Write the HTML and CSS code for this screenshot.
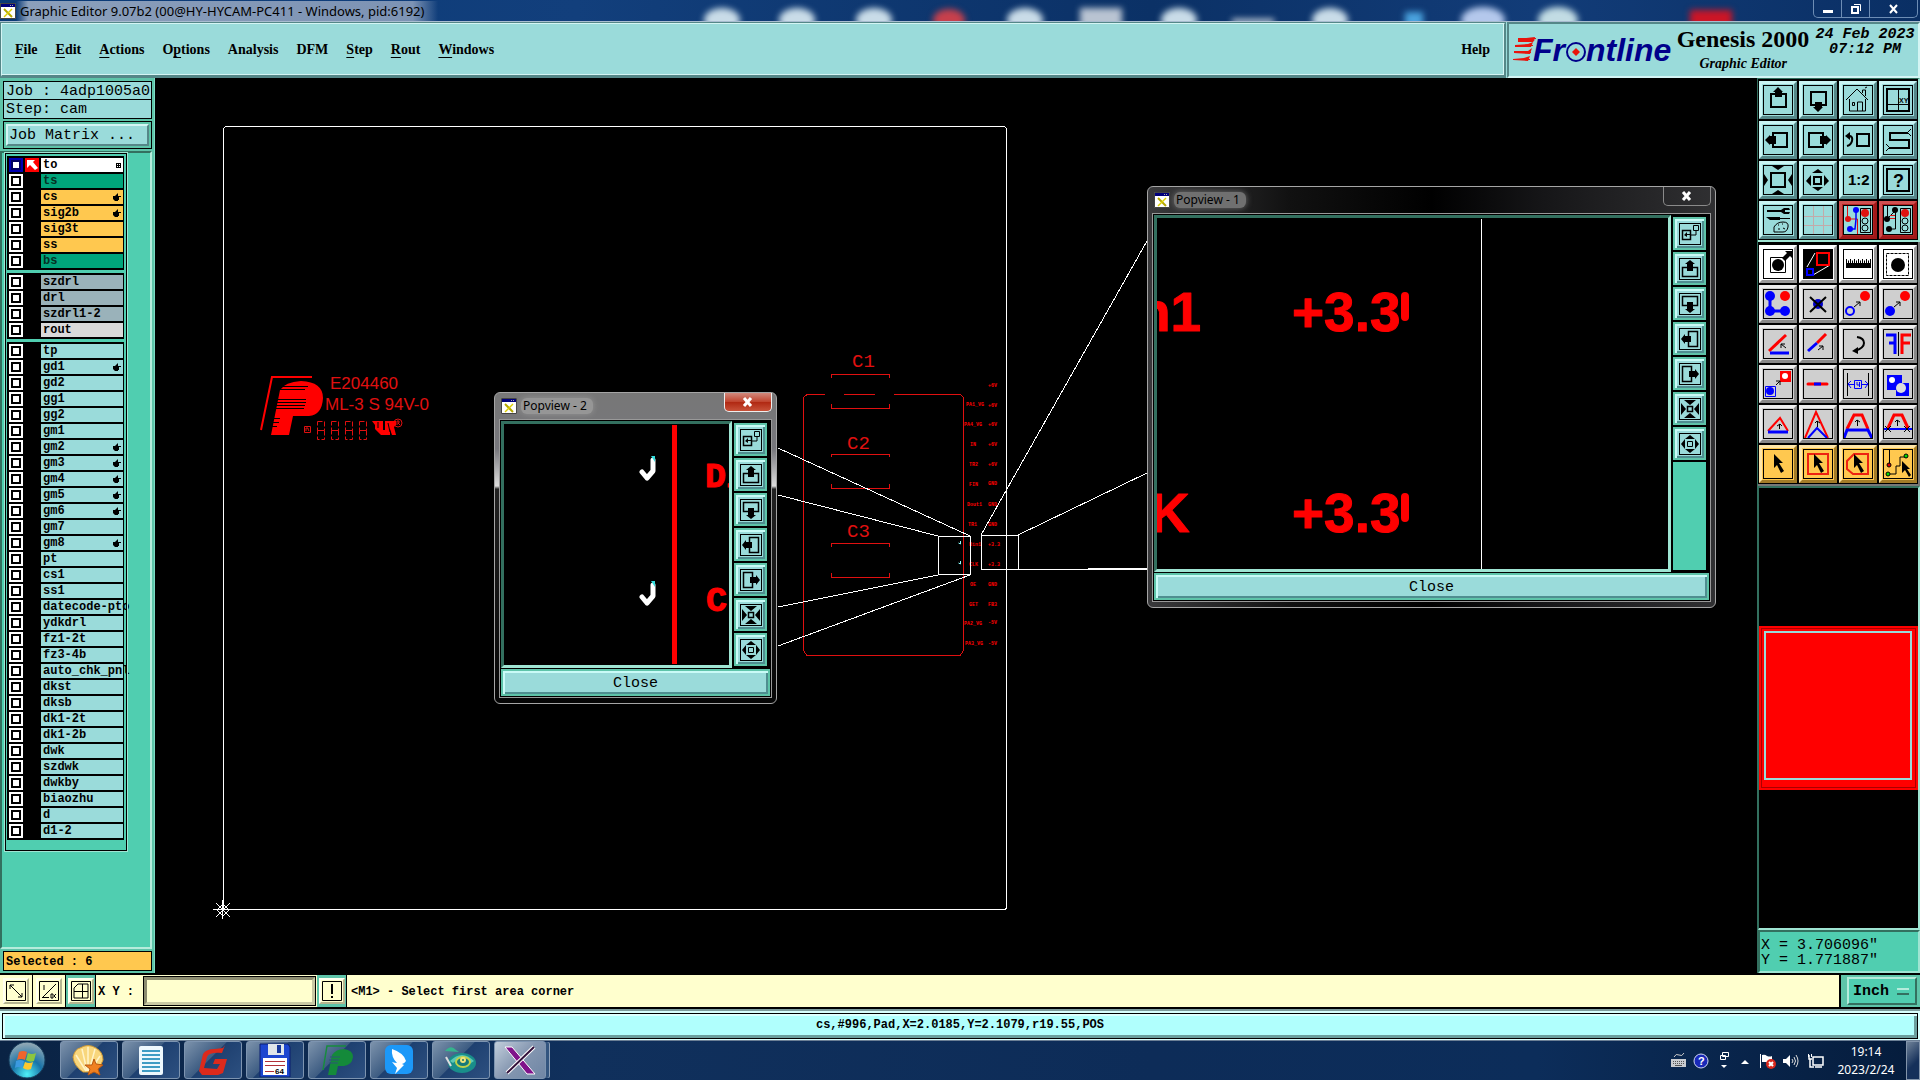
FILE: index.html
```html
<!DOCTYPE html>
<html lang="en">
  <head>
    <meta charset="utf-8">
    <title>Graphic Editor 9.07b2</title>
    <link rel="stylesheet" href="styles.css">
  </head>
  <body>
    <!-- shared icons -->
    <svg class="defs" width="0" height="0">
      <symbol id="xwin" viewBox="0 0 16 16"><path fill="#fff" stroke="#444" d="M.5.5h15v15H.5z"/><path fill="#00007c" d="M1 1h14v3H1z"/><path stroke="#aaa" d="M10 2.500h1m1 0h1"/><path stroke="#b5a800" stroke-width="2" d="M4 6l8 8"/><path stroke="#ddd000" stroke-width="1.500" d="M12 6l-8 8"/></symbol>
      <symbol id="hand" viewBox="0 0 8 8"><path d="M0 3h2l1-1 2-2v3h3v1H6v3H5v1H2L0 6z"/></symbol>
      <symbol id="cursor" viewBox="0 0 28 28"><path d="M10 4l9 9-4 0 5 8-3 2-4-8-3 3z"/></symbol>
      <symbol id="p-zoom" viewBox="0 0 20 20"><path fill="none" stroke="#000" d="M13.500 1.500h5v5h-5zM16 7v4h-6"/><path fill="none" stroke="#000" stroke-width="1.500" d="M2.500 6.500h8v9h-8z"/><path d="M4 11l3-3v2h4v1H7v2z"/></symbol>
      <symbol id="p-up" viewBox="0 0 20 20"><path fill="none" stroke="#000" stroke-width="1.500" d="M7 8.500H2.500v9h15v-9H13"/><path d="M10 1l5 4h-2v7H7V5H5z"/></symbol>
      <symbol id="p-down" viewBox="0 0 20 20"><path fill="none" stroke="#000" stroke-width="1.500" d="M7 11.500H2.500v-9h15v9H13"/><path d="M10 19l5-4h-2V8H7v7H5z"/></symbol>
      <symbol id="p-left" viewBox="0 0 20 20"><path fill="none" stroke="#000" stroke-width="1.500" d="M8.500 7V2.500h9v15h-9V13"/><path d="M1 10l4-5v2h6v6H5v2z"/></symbol>
      <symbol id="p-right" viewBox="0 0 20 20"><path fill="none" stroke="#000" stroke-width="1.500" d="M11.500 7V2.500h-9v15h9V13"/><path d="M19 10l-4-5v2H9v6h6v2z"/></symbol>
      <symbol id="p-in" viewBox="0 0 20 20"><path fill="none" stroke="#000" stroke-width="1.500" d="M7.500 7.500h5v5h-5z"/><path d="M4 1h12l-6 5zM4 19h12l-6-5zM1 4v12l5-6zM19 4v12l-5-6z"/></symbol>
      <symbol id="p-out" viewBox="0 0 20 20"><path fill="none" stroke="#000" d="M7.500 7.500h5v5h-5z"/><path d="M5 5h10l-5-4zM5 15h10l-5 4zM5 5v10l-4-5zM15 5v10l4-5z"/></symbol>
    </svg>

    <header class="titlebar">
      <svg class="glass" width="100%" height="22">
        <g class="blurred">
          <ellipse cx="722" cy="20" rx="18" ry="12" fill="#c9dce8"/><ellipse cx="797" cy="20" rx="18" ry="12" fill="#c9dce8"/><ellipse cx="874" cy="20" rx="18" ry="12" fill="#c9dce8"/><ellipse cx="949" cy="20" rx="16" ry="11" fill="#c7404c"/>
          <ellipse cx="1025" cy="20" rx="18" ry="12" fill="#c9dce8"/><path d="M1080 8h42v20h-42z" fill="#b9c4d2"/><ellipse cx="1179" cy="20" rx="18" ry="12" fill="#c9dce8"/><path d="M1232 19h42v5h-42z" fill="#d0d8e0"/>
          <ellipse cx="1330" cy="20" rx="18" ry="12" fill="#c9dce8"/><path d="M1405 12h18v16h-18z" fill="#4aa3df"/><ellipse cx="1483" cy="20" rx="22" ry="13" fill="#b4c8ec"/><ellipse cx="1558" cy="20" rx="20" ry="13" fill="#c2dce4"/><path d="M1690 10h42v18h-42z" fill="#cc1526"/>
        </g>
      </svg>
      <svg class="app-icon"><use href="#xwin"/></svg>
      <span class="caption">Graphic Editor 9.07b2 (00@HY-HYCAM-PC411 - Windows, pid:6192)</span>
      <div class="window-buttons">
        <button aria-label="Minimize"><svg width="12" height="12"><path fill="#fff" d="M1 7h10v3H1z"/></svg></button>
        <button aria-label="Restore"><svg width="12" height="12"><path fill="none" stroke="#fff" stroke-width="2" d="M2 4h6v6H2z"/><path fill="none" stroke="#fff" d="M4 1.500h6.500V8"/></svg></button>
        <button class="wide" aria-label="Close"><svg width="12" height="12"><path stroke="#fff" stroke-width="2" d="M2 2l7 8M9 2l-7 8"/></svg></button>
      </div>
    </header>

    <div class="top">
      <nav class="menubar">
        <a href="#"><u>F</u>ile</a>
        <a href="#"><u>E</u>dit</a>
        <a href="#"><u>A</u>ctions</a>
        <a href="#">O<u>p</u>tions</a>
        <a href="#">Analysis</a>
        <a href="#">DFM</a>
        <a href="#"><u>S</u>tep</a>
        <a href="#"><u>R</u>out</a>
        <a href="#"><u>W</u>indows</a>
        <a href="#" class="help">Help</a>
      </nav>
      <div class="brand">
        <svg class="logo" width="162" height="36" viewBox="0 0 162 36">
          <path fill="#e8140c" d="M5 6l17-2-1 4 3-4-4 5H5zM2 12l13-1 5-2-2 5-16 0zM1 18h14l4-3-2 6-16-1zM0 26l11-1 6-2-2 5-15-1z"/>
          <path stroke="#e8140c" d="M5 5.500h18M2 12.500h18M1 19.500h17M0 26.500h17"/>
          <text class="wordmark" x="20" y="28">Fr</text>
          <circle cx="63" cy="19" r="9" fill="none" stroke="#00008b" stroke-width="2"/>
          <path fill="#e8140c" d="M63 15l4 4-4 4-4-4z"/>
          <text class="wordmark" x="73" y="28">ntline</text>
        </svg>
        <div class="product">
          <div class="name">Genesis 2000</div>
          <div class="module">Graphic Editor</div>
        </div>
        <div class="date">24 Feb 2023<br>07:12 PM</div>
      </div>
    </div>

    <main class="main">
      <aside class="sidebar">
        <div class="job">
          <div>Job : 4adp1005a0</div>
          <div>Step: cam</div>
        </div>
        <div class="matrix"><button>Job Matrix ...</button></div>
        <div class="layers-area">
          <div class="layers">
            <ul class="group">
              <li><input type="checkbox" class="active" aria-label="to"><span class="mark"><svg width="12" height="12"><path fill="#fff" d="M1 1h8L7 3l5 6-3 2-5-5-3 3z"/></svg></span><button class="work">to<svg class="grid" viewBox="0 0 5 5"><path d="M0 0h5v5H0z"/><path fill="#fff" d="M1 1h1v1H1zM3 1h1v1H3zM1 3h1v1H1zM3 3h1v1H3z"/></svg></button></li>
              <li><input type="checkbox" aria-label="ts"><button class="mask">ts</button></li>
              <li><input type="checkbox" aria-label="cs"><button class="signal">cs<svg><use href="#hand"/></svg></button></li>
              <li><input type="checkbox" aria-label="sig2b"><button class="signal">sig2b<svg><use href="#hand"/></svg></button></li>
              <li><input type="checkbox" aria-label="sig3t"><button class="signal">sig3t</button></li>
              <li><input type="checkbox" aria-label="ss"><button class="signal">ss</button></li>
              <li><input type="checkbox" aria-label="bs"><button class="mask">bs</button></li>
            </ul>
            <ul class="group">
              <li><input type="checkbox" aria-label="szdrl"><button class="drill">szdrl</button></li>
              <li><input type="checkbox" aria-label="drl"><button class="drill">drl</button></li>
              <li><input type="checkbox" aria-label="szdrl1-2"><button class="drill">szdrl1-2</button></li>
              <li><input type="checkbox" aria-label="rout"><button class="rout">rout</button></li>
            </ul>
            <ul class="group">
              <li><input type="checkbox" aria-label="tp"><button>tp</button></li>
              <li><input type="checkbox" aria-label="gd1"><button>gd1<svg><use href="#hand"/></svg></button></li>
              <li><input type="checkbox" aria-label="gd2"><button>gd2</button></li>
              <li><input type="checkbox" aria-label="gg1"><button>gg1</button></li>
              <li><input type="checkbox" aria-label="gg2"><button>gg2</button></li>
              <li><input type="checkbox" aria-label="gm1"><button>gm1</button></li>
              <li><input type="checkbox" aria-label="gm2"><button>gm2<svg><use href="#hand"/></svg></button></li>
              <li><input type="checkbox" aria-label="gm3"><button>gm3<svg><use href="#hand"/></svg></button></li>
              <li><input type="checkbox" aria-label="gm4"><button>gm4<svg><use href="#hand"/></svg></button></li>
              <li><input type="checkbox" aria-label="gm5"><button>gm5<svg><use href="#hand"/></svg></button></li>
              <li><input type="checkbox" aria-label="gm6"><button>gm6<svg><use href="#hand"/></svg></button></li>
              <li><input type="checkbox" aria-label="gm7"><button>gm7</button></li>
              <li><input type="checkbox" aria-label="gm8"><button>gm8<svg><use href="#hand"/></svg></button></li>
              <li><input type="checkbox" aria-label="pt"><button>pt</button></li>
              <li><input type="checkbox" aria-label="cs1"><button>cs1</button></li>
              <li><input type="checkbox" aria-label="ss1"><button>ss1</button></li>
              <li><input type="checkbox" aria-label="datecode-pto"><button>datecode-pto</button></li>
              <li><input type="checkbox" aria-label="ydkdrl"><button>ydkdrl</button></li>
              <li><input type="checkbox" aria-label="fz1-2t"><button>fz1-2t</button></li>
              <li><input type="checkbox" aria-label="fz3-4b"><button>fz3-4b</button></li>
              <li><input type="checkbox" aria-label="auto_chk_pnl"><button>auto_chk_pnl</button></li>
              <li><input type="checkbox" aria-label="dkst"><button>dkst</button></li>
              <li><input type="checkbox" aria-label="dksb"><button>dksb</button></li>
              <li><input type="checkbox" aria-label="dk1-2t"><button>dk1-2t</button></li>
              <li><input type="checkbox" aria-label="dk1-2b"><button>dk1-2b</button></li>
              <li><input type="checkbox" aria-label="dwk"><button>dwk</button></li>
              <li><input type="checkbox" aria-label="szdwk"><button>szdwk</button></li>
              <li><input type="checkbox" aria-label="dwkby"><button>dwkby</button></li>
              <li><input type="checkbox" aria-label="biaozhu"><button>biaozhu</button></li>
              <li><input type="checkbox" aria-label="d"><button>d</button></li>
              <li><input type="checkbox" aria-label="d1-2"><button>d1-2</button></li>
            </ul>
          </div>
        </div>
        <div class="selected">Selected : 6</div>
      </aside>

      <section class="canvas">
        <svg class="board" width="100%" height="100%">
          <g transform="translate(-155 -78)" fill="none">
            <!-- profile and datum -->
            <g stroke="#fff" shape-rendering="crispEdges">
              <rect x="223.500" y="126.500" width="783" height="783" rx="3"/>
              <path d="M213 909.500h19M222.500 900v19"/>
            </g>
            <path stroke="#fff" d="M216 903l14 14M230 903l-14 14M223 904l6 6-6 6-6-6z"/>
            <!-- vendor mark -->
            <path stroke="#f00" stroke-width="2" d="M312 377h-40l-11 53"/>
            <path fill="#f00" d="M271 435l9-45q5-8 21-9q22 1 22 17q-1 17-14 18h-16l-4 19z"/>
            <path stroke="#000" d="M278 386.500h30M277 389.500h28M274 399.500h32M274 402.500h32M273 405.500h32M273 408.500h31M270 418.500h10M270 422.500h9M268 426.500h9"/>
            <g class="silk">
              <text x="330" y="389">E204460</text>
              <text x="325" y="410">ML-3 S 94V-0</text>
            </g>
            <g stroke="#e01010" stroke-dasharray="5 2">
              <rect x="317.500" y="421.500" width="7" height="9"/><rect x="317.500" y="430.500" width="7" height="9"/>
              <rect x="331.500" y="421.500" width="7" height="9"/><rect x="331.500" y="430.500" width="7" height="9"/>
              <rect x="345.500" y="421.500" width="7" height="9"/><rect x="345.500" y="430.500" width="7" height="9"/>
              <rect x="359.500" y="421.500" width="7" height="9"/><rect x="359.500" y="430.500" width="7" height="9"/>
            </g>
            <path stroke="#e01010" d="M304.500 426.500h6v6h-6zM306 431v-3h2v1l1 2M398 419a4 4 0 1 1 0 8a4 4 0 1 1 0-8zM397 425v-4h2v2h-1l2 2"/>
            <path fill="#f00" d="M372 421h11v9h2v-9h11v4l-2 2 2 8h-4l-2-6v6h-9l-6-6v-4z"/>
            <path stroke="#000" d="M378 422v6M388 423l2 9"/>
            <!-- capacitors and connector outline -->
            <g stroke="#e01010" shape-rendering="crispEdges">
              <path d="M825 394.500h-18l-3.500 3v253l3 4.500h154l3-4.500v-253l-3-3h-67M844 394.500h31"/>
              <path d="M831.500 378v-4h58v4M831.500 404v4h58v-4M831.500 457v-3h58v3M831.500 484v4h58v-4M831.500 547v-4h58v4M831.500 573v4h58v-4"/>
            </g>
            <g class="ref">
              <text x="852" y="367">C1</text>
              <text x="847" y="449">C2</text>
              <text x="847" y="537">C3</text>
            </g>
            <g class="pins">
              <text x="966" y="406">PA1_VG</text><text x="964" y="426">PA4_VG</text><text x="970" y="446">IN</text><text x="969" y="466">TR2</text><text x="969" y="486">FIN</text><text x="967" y="506">Dout1</text><text x="968" y="526">TR1</text><text x="969" y="546">Din1</text><text x="969" y="566">CLK</text><text x="970" y="586">OE</text><text x="969" y="606">GET</text><text x="964" y="625">PA2_VG</text><text x="965" y="645">PA3_VG</text>
              <text x="988" y="387">+6V</text><text x="988" y="407">+6V</text><text x="988" y="426">+6V</text><text x="988" y="446">+6V</text><text x="988" y="466">+6V</text><text x="988" y="485">GND</text><text x="988" y="506">GND</text><text x="988" y="526">GND</text><text x="988" y="546">+3.3</text><text x="988" y="566">+3.3</text><text x="988" y="586">GND</text><text x="988" y="606">FB3</text><text x="988" y="624">-5V</text><text x="988" y="645">-5V</text>
            </g>
            <path stroke="#8ff" d="M960.500 541v3l-2-1M960.500 561v3l-2-1"/>
            <!-- popview links -->
            <g stroke="#fff" shape-rendering="crispEdges">
              <rect x="938.500" y="536.500" width="32" height="38"/>
              <rect x="981.500" y="535.500" width="37" height="34"/>
              <path d="M778 448l192 88M778 495l160 41M778 607l160-32M778 646l192-71M981 535l166-294M1018 535l129-62M1018 569.500h129M1088 568.500h59"/>
            </g>
          </g>
        </svg>

        <div class="popview first">
          <div class="pop-title"><svg class="app-icon"><use href="#xwin"/></svg><span>Popview - 1</span><button class="pop-x" aria-label="Close window"><svg width="12" height="12"><path stroke="#fff" stroke-width="3" d="M2 2l7 8M9 2l-7 8"/></svg></button></div>
          <div class="pop-body">
            <div class="pop-row">
              <svg class="view" height="357">
                <g transform="translate(-1157 -218)">
                  <g class="big">
                    <text x="1137" y="331">n1</text><text x="1292" y="331">+3.3</text>
                    <text x="1150" y="532">K</text><text x="1292" y="532">+3.3</text>
                  </g>
                  <path stroke="#f00" stroke-width="8" stroke-linecap="round" d="M1405 296v21M1405 497v21"/>
                  <path stroke="#fff" d="M1481.500 219v350"/>
                </g>
              </svg>
              <div class="pop-tools">
                <button aria-label="Redefine area"><svg><use href="#p-zoom"/></svg></button>
                <button aria-label="Pan up"><svg><use href="#p-up"/></svg></button>
                <button aria-label="Pan down"><svg><use href="#p-down"/></svg></button>
                <button aria-label="Pan left"><svg><use href="#p-left"/></svg></button>
                <button aria-label="Pan right"><svg><use href="#p-right"/></svg></button>
                <button aria-label="Zoom in"><svg><use href="#p-in"/></svg></button>
                <button aria-label="Zoom out"><svg><use href="#p-out"/></svg></button>
                <div class="filler"></div>
              </div>
            </div>
            <button class="pop-close">Close</button>
          </div>
        </div>

        <div class="popview second">
          <div class="pop-title"><svg class="app-icon"><use href="#xwin"/></svg><span>Popview - 2</span><button class="pop-x" aria-label="Close window"><svg width="12" height="12"><path stroke="#fff" stroke-width="3" d="M2 2l7 8M9 2l-7 8"/></svg></button></div>
          <div class="pop-body">
            <div class="pop-row">
              <svg class="view" height="247">
                <g transform="translate(-504 -424)">
                  <g fill="none" stroke="#fff" stroke-width="5" stroke-linecap="round" stroke-linejoin="round">
                    <path d="M653 460v11l-6 7-5-6M653 585v11l-6 7-5-6"/>
                  </g>
                  <path fill="#3dd" d="M651 456h4v6l-2-3zM651 581h4v6l-2-3z"/>
                  <path stroke="#f00" stroke-width="5" d="M674.500 425v239"/>
                  <g class="mid"><text x="705" y="487">Din1</text><text x="706" y="611">CLK</text></g>
                </g>
              </svg>
              <div class="pop-tools">
                <button aria-label="Redefine area"><svg><use href="#p-zoom"/></svg></button>
                <button aria-label="Pan up"><svg><use href="#p-up"/></svg></button>
                <button aria-label="Pan down"><svg><use href="#p-down"/></svg></button>
                <button aria-label="Pan left"><svg><use href="#p-left"/></svg></button>
                <button aria-label="Pan right"><svg><use href="#p-right"/></svg></button>
                <button aria-label="Zoom in"><svg><use href="#p-in"/></svg></button>
                <button aria-label="Zoom out"><svg><use href="#p-out"/></svg></button>
              </div>
            </div>
            <button class="pop-close">Close</button>
          </div>
        </div>
      </section>

      <aside class="right">
        <div class="tools view-tools">
          <button aria-label="Pan up"><svg viewBox="0 0 28 28"><path class="l2" d="M7 8h15v13H7z"/><path d="M14 1l5 5h-1v5h-7V6h-2z"/></svg></button>
          <button aria-label="Pan down"><svg viewBox="0 0 28 28"><path class="l2" d="M7 6h15v13H7z"/><path d="M14 26l5-5h-1v-5h-7v5h-2z"/></svg></button>
          <button aria-label="Home"><svg viewBox="0 0 28 28"><path class="l1" d="M2 14L13 3l11 11M5.500 13v12h16V13M13.500 25v-9h5v9M8.500 16.500h2v3h-2zM18.500 7V4h3v6M21 2l2-1"/></svg></button>
          <button aria-label="Zoom to coordinates"><svg viewBox="0 0 28 28"><path class="l2" d="M3 3h22v22H3z"/><path class="l1" d="M14.500 3v22M3 18.500h22"/><text class="t7" x="15" y="17">XY</text></svg></button>
          <button aria-label="Pan left"><svg viewBox="0 0 28 28"><path class="l2" d="M9 7h14v14H9z"/><path d="M1 14l5-5v1h6v8H6v1z"/></svg></button>
          <button aria-label="Pan right"><svg viewBox="0 0 28 28"><path class="l2" d="M5 7h14v14H5z"/><path d="M27 14l-5-5v1h-6v8h6v1z"/></svg></button>
          <button aria-label="Previous zoom"><svg viewBox="0 0 28 28"><path class="l2" d="M13 8h12v12H13z"/><path class="l2" d="M3 10h3q3 1 2 5t-5 5"/><path d="M1 10l5-4v8z"/></svg></button>
          <button aria-label="Serpentine"><svg viewBox="0 0 28 28"><path class="l2" d="M24 7H6v7h19v8H5"/><path class="l1" d="M24 6l3-3M24 7l3 3M5 21l-3-3M5 22l-3 3"/></svg></button>
          <button aria-label="Zoom in"><svg viewBox="0 0 28 28"><path class="l2" d="M7 7h14v14H7z"/><path d="M8 0h12l-6 4zM8 28h12l-6-4zM0 8v12l4-6zM28 8v12l-4-6z"/></svg></button>
          <button aria-label="Zoom out"><svg viewBox="0 0 28 28"><path class="l2" d="M10 11h7v7h-7z"/><path d="M8 7h11l-5-4zM8 21h11l-5 4zM7 9v11l-5-5zM20 9v11l5-5z"/></svg></button>
          <button aria-label="One to two"><svg viewBox="0 0 28 28"><text class="t14" x="4" y="19">1:2</text></svg></button>
          <button aria-label="Help"><svg viewBox="0 0 28 28"><path class="l2" d="M3 3h22v22H3z"/><text class="t18" x="9" y="21">?</text></svg></button>
          <button aria-label="Tools"><svg viewBox="0 0 28 28"><path d="M3 4h14l3-2h5l1 2h-5v2h5l-1 2h-5l-3-2H3zM2 11h14v3H6zM16 12h10v1H16z"/><path class="l1" d="M10 21q3-5 9-5t5 5-5 5-9 0zM14 19h1M18 18h1M14 23h2M19 22l2 1"/></svg></button>
          <button class="plain" aria-label="Grid"><svg viewBox="0 0 28 28"><path stroke="#c3a9a9" d="M9.500 0v28M19.500 0v28M0 10.500h28M0 19.500h28"/></svg></button>
          <button class="red" aria-label="Connections on"><svg viewBox="0 0 28 28"><path fill="none" stroke="#e01010" d="M3.500 0v13h10V28"/><path fill="none" stroke="#00f" stroke-width="1.500" d="M12 3v10l-1 10H6"/><circle cx="4" cy="13" r="3" fill="#e01010"/><circle cx="12" cy="4" r="3" fill="#00f"/><circle cx="6" cy="23" r="3" fill="#00f"/><path class="l1" d="M16.500 2.500h10v24h-10z"/><circle cx="21" cy="7" r="4" fill="#e01010"/><circle class="l1" cx="21" cy="15" r="3"/><circle class="l1" cx="21" cy="22" r="3"/></svg></button>
          <button class="red" aria-label="Connections off"><svg viewBox="0 0 28 28"><path class="l1" d="M3.500 0v13M11.500 4v19H6M3 13L12 4"/><circle cx="3" cy="13" r="3"/><circle cx="11" cy="4" r="3"/><circle cx="5" cy="23" r="3"/><path stroke="#e01010" d="M6 9.500h5M6 12.500h5"/><path class="l1" d="M16.500 2.500h10v24h-10z"/><circle cx="21" cy="7" r="4" fill="#e01010"/><circle class="l1" cx="21" cy="15" r="3"/><circle class="l1" cx="21" cy="22" r="3"/></svg></button>
        </div>
        <div class="tools edit-tools">
          <button class="white" aria-label="Pad"><svg viewBox="0 0 28 28"><path class="l1" d="M6.500 7.500h15v15h-15z"/><circle cx="14" cy="15" r="6"/><path d="M18 8l5-5-2-2h7v7l-2-2-5 5z"/></svg></button>
          <button class="white" aria-label="Popview"><svg viewBox="0 0 28 28"><path d="M0 0h28v28H0z"/><path stroke="#fff" d="M3 17l8-14M9 25l17-10"/><path fill="none" stroke="#f00" stroke-width="2" d="M13 3h12v12H13z"/><path fill="none" stroke="#00f" stroke-width="2" d="M3 19h6v6H3z"/></svg></button>
          <button class="white" aria-label="Measure"><svg viewBox="0 0 28 28"><path d="M2 13h25v5H2z"/><path stroke="#000" stroke-dasharray="1 1" stroke-width="3" d="M2 12h25"/><path stroke="#000" d="M2.500 9v5M6.500 9v5M10.500 9v5M14.500 9v5M18.500 9v5M22.500 9v5M26.500 9v5"/></svg></button>
          <button class="white" aria-label="Select pad"><svg viewBox="0 0 28 28"><path class="l1" stroke-dasharray="3 1" d="M2.500 3.500h22v22h-22z"/><circle cx="14" cy="15" r="7"/></svg></button>
          <button aria-label="Add net"><svg viewBox="0 0 28 28"><path fill="none" stroke="#00f" stroke-width="3" d="M6 6v15h15"/><g fill="#00f"><circle cx="6" cy="6" r="5"/><circle cx="6" cy="21" r="5"/><circle cx="21" cy="21" r="5"/></g><circle cx="21" cy="6" r="5" fill="#f00"/></svg></button>
          <button aria-label="Delete"><svg viewBox="0 0 28 28"><circle cx="14" cy="14" r="5" fill="#00c"/><path stroke="#000" stroke-width="2" d="M6 7l16 15M22 7L6 22"/></svg></button>
          <button aria-label="Move"><svg viewBox="0 0 28 28"><circle cx="6" cy="21" r="4" fill="none" stroke="#00f" stroke-width="2"/><circle cx="21" cy="6" r="5" fill="#f00"/><path class="l1" d="M10 17l6-5M12 12h4v4"/></svg></button>
          <button aria-label="Copy"><svg viewBox="0 0 28 28"><circle cx="6" cy="21" r="5" fill="#00f"/><circle cx="21" cy="6" r="5" fill="#f00"/><path class="l1" d="M10 17l6-5M12 12h4v4"/></svg></button>
          <button aria-label="Rotate line"><svg viewBox="0 0 28 28"><path stroke="#f00" stroke-width="3" d="M5 21L22 5"/><path stroke="#00f" stroke-width="3" d="M6 23h19"/><path class="l1" d="M22 18l-5-4M17 18v-4h4"/></svg></button>
          <button aria-label="Stretch line"><svg viewBox="0 0 28 28"><path stroke="#f00" stroke-width="3" d="M13 13l9-9"/><path stroke="#00f" stroke-width="3" d="M4 21l9-8"/><path class="l1" d="M14 20l5-4M15 16h4v4"/></svg></button>
          <button aria-label="Rotate"><svg viewBox="0 0 28 28"><path class="l2" d="M13 7q7 1 7 6t-9 8"/><path d="M8 21l6-4v7z"/></svg></button>
          <button aria-label="Mirror"><svg viewBox="0 0 28 28"><path stroke="#000" d="M14.500 2v24"/><path fill="none" stroke="#00f" stroke-width="3" d="M2 5h9v19M5 13h6"/><path fill="none" stroke="#f00" stroke-width="3" d="M27 5h-9v19M18 13h8"/></svg></button>
          <button aria-label="Change symbol"><svg viewBox="0 0 28 28"><path fill="#f00" d="M16 1h11v11H16z"/><circle cx="21" cy="6" r="3" fill="#fff"/><path fill="none" stroke="#00f" d="M1.500 16.500h10v10h-10z"/><circle cx="6" cy="21" r="4" fill="#00f"/><path class="l1" d="M12 15l4-4M12 11h4v4"/></svg></button>
          <button aria-label="Break line"><svg viewBox="0 0 28 28"><path stroke="#f00" stroke-width="3" stroke-linecap="round" d="M4 14h19"/><path stroke="#00f" stroke-width="3" d="M10 14h7"/></svg></button>
          <button aria-label="Spacing"><svg viewBox="0 0 28 28"><path stroke="#000" d="M3.500 3v23M24.500 3v23"/><path fill="none" stroke="#00f" d="M10.500 10.500h7v8h-7zM4 14.500h6M18 14.500h6M7 11l-3 3 3 4M21 11l3 3-3 4M13 12v3h3M15.500 12v5"/></svg></button>
          <button aria-label="Merge"><svg viewBox="0 0 28 28"><path fill="#00f" d="M3 5h15v8h7v13H12v-6H3z"/><circle cx="8" cy="10" r="3" fill="#fff"/><circle cx="17" cy="18" r="5" fill="#ddd"/></svg></button>
          <button aria-label="Triangle corner"><svg viewBox="0 0 28 28"><path fill="none" stroke="#f00" stroke-width="2" d="M4 21L16 8l8 13"/><path stroke="#00f" stroke-width="3" d="M4 22h20"/><path class="l1" d="M15.500 19v-5M13 16l3-2 2 2"/></svg></button>
          <button aria-label="Peak corner"><svg viewBox="0 0 28 28"><path fill="none" stroke="#f00" stroke-width="2" d="M1 28L12 2l12 26"/><path fill="none" stroke="#00f" stroke-width="2" d="M4 28l9-10 10 10"/><path class="l1" d="M13.500 17v-6M11 13l2-2 3 2"/></svg></button>
          <button aria-label="Slide trace"><svg viewBox="0 0 28 28"><path fill="none" stroke="#f00" stroke-width="3" d="M3 19L10 5h8l6 14"/><path fill="none" stroke="#00f" stroke-width="3" d="M0 28l3-8h21l4 8"/><path class="l1" d="M13.500 16v-6M11 12l2-2 3 2"/></svg></button>
          <button aria-label="Cut trace"><svg viewBox="0 0 28 28"><path fill="none" stroke="#f00" stroke-width="3" d="M4 18L10 5h8l6 13"/><path fill="none" stroke="#00f" stroke-width="2" d="M0 19h28"/><path class="l1" d="M13.500 16v-6M11 12l2-2 3 2M1 16l6 6M7 16l-6 6M20 16l6 6M26 16l-6 6"/></svg></button>
          <button class="pick" aria-label="Select"><svg viewBox="0 0 28 28"><use href="#cursor"/></svg></button>
          <button class="pick" aria-label="Select in frame"><svg viewBox="0 0 28 28"><path fill="none" stroke="#e21" stroke-width="2" d="M4 4h20v20H4z"/><use href="#cursor"/></svg></button>
          <button class="pick" aria-label="Select in polygon"><svg viewBox="0 0 28 28"><path fill="none" stroke="#e21" stroke-width="2" d="M10 4h14v20H9l-6-5v-8z"/><use href="#cursor"/></svg></button>
          <button class="pick" aria-label="Select net"><svg viewBox="0 0 28 28"><path class="l1" d="M5.500 0v14M6 24h6v-8h4V7h7"/><circle cx="5" cy="15" r="2" fill="#d00" stroke="#000"/><circle cx="22" cy="6" r="2" fill="#0d0" stroke="#000"/><circle cx="4" cy="24" r="2" fill="#0d0" stroke="#000"/><path d="M18 11l8 8-3 0 4 6-2 2-4-7-3 3z"/></svg></button>
        </div>
        <div class="overview"><div class="extent"><div class="frame"></div></div></div>
        <div class="coords">X = 3.706096"<br>Y = 1.771887"</div>
      </aside>
    </main>

    <div class="command">
      <div class="snap"><button aria-label="Snap"><svg viewBox="0 0 20 20"><path class="l1" d="M.5.500h19v19H.5zM4 4l12 12M4 8V4h4M16 12v4h-4"/></svg></button></div>
      <div class="snap"><button aria-label="Angle"><svg viewBox="0 0 20 20"><path class="l1" d="M.5.500h19v19H.5zM3 17L17 3M3 16.500h7M5 4v5M12 13h2v4h-2zM17 13l-2 2 2 2"/></svg></button></div>
      <div class="snap on"><button aria-label="Grid snap"><svg viewBox="0 0 20 20"><path class="l1" d="M.5.500h19v19H.5zM3 7l4-4h10v14H3zM11.500 3v14M3 10.500h14"/></svg></button></div>
      <label for="xy">X Y :</label>
      <input type="text" id="xy">
      <div class="snap on"><button aria-label="Repeat"><svg viewBox="0 0 20 20"><path class="l1" d="M.5.500h19v19H.5z"/><path d="M9 3h2v10H9zM9 15h2v2H9z"/></svg></button></div>
      <div class="message">&lt;M1&gt; - Select first area corner</div>
      <div class="units">
        <select aria-label="Units"><option>Inch</option><option>mm</option></select>
      </div>
    </div>

    <div class="status"><div>cs,#996,Pad,X=2.0185,Y=2.1079,r19.55,POS</div></div>

    <footer class="taskbar">
      <button class="start" aria-label="Start"><svg width="38" height="38" viewBox="0 0 38 38"><defs><radialGradient id="orb" cx="50%" cy="90%" r="85%"><stop offset="0" stop-color="#4ff0f8"/><stop offset="0.500" stop-color="#1873a8"/><stop offset="1" stop-color="#8da6b4"/></radialGradient></defs><circle cx="19" cy="19" r="18" fill="url(#orb)" stroke="#173d5c"/><path fill="#f0642c" d="M11 11q4-2 8 0l-2 8q-4-2-8 0z"/><path fill="#8cc63e" d="M20 12q4 2 8 0l-2 8q-4 2-8-1z"/><path fill="#3b9ae0" d="M8 20q4-2 8 0l-2 7q-4-2-7 0z"/><path fill="#fdc82e" d="M17 21q4 2 8 0l-2 7q-4 2-8-1z"/></svg></button>
      <button class="task" aria-label="Shell"><svg width="34" height="34" viewBox="0 0 34 34"><path fill="#f8d67c" stroke="#d49c34" d="M11 29q-9-6-10-15 2-8 7-9 8-5 16 0 7 4 7 12-3 9-11 12z"/><path stroke="#fff3c8" stroke-width="1.500" d="M14 28L4 12M15 28L10 6M16 28V4M17 28l6-22M18 28l10-15"/><path fill="#f08020" stroke="#b85810" d="M22 16l2 5 7 1-5 4 2 6-6-3-6 3 2-6-5-4h7z"/></svg></button>
      <button class="task" aria-label="Notes"><svg width="34" height="34" viewBox="0 0 34 34"><rect x="5" y="3" width="24" height="29" rx="2" fill="#eef8fd"/><path stroke="#3f9cc4" stroke-width="2" d="M8 8h18M8 12h18M8 16h18M8 20h18M8 24h18M8 28h18"/></svg></button>
      <button class="task" aria-label="Genesis"><svg width="34" height="34" viewBox="0 0 34 34"><path fill="#dc2a1c" d="M29 2l-3 8q-13-1-15 4l-3 11 13 1 3-5h-7l2-5h12l-4 14-5 2H6l-3-4 4-17q3-5 12-5l8-1z"/></svg></button>
      <button class="task" aria-label="Save 64"><svg width="34" height="34" viewBox="0 0 34 34"><path fill="#1c46d0" stroke="#0b1f70" d="M2 1h28l2 3v30H2z"/><path fill="#dfe6ea" d="M10 1h16v11H10z"/><path fill="#16389c" d="M19 2h4v8h-4z"/><path fill="#fff" d="M5 15h24v17H5z"/><path stroke="#b03038" d="M7 18.500h20M7 22.500h20M7 28.500h10"/><path fill="#fff" d="M16 24h13v8H16z"/><text x="17" y="31" class="t8">64</text></svg></button>
      <button class="task" aria-label="Planner"><svg width="34" height="34" viewBox="0 0 34 34"><path fill="none" stroke="#178c3e" stroke-width="1.500" d="M26 3H7L3 27"/><path fill="#148a3a" d="M8 32l4-20q4-6 12-6 9 1 9 8-1 8-9 9h-6l-2 9z"/><path stroke="#2c5577" d="M10 14h10M9 17h10M9 20h9"/></svg></button>
      <button class="task" aria-label="DingTalk"><svg width="34" height="34" viewBox="0 0 34 34"><rect x="3" y="2" width="28" height="29" rx="6" fill="#1c98f8"/><path fill="#fff" d="M10 6q12 4 14 12-2 3-4 3l2 1-9 9 2-6-5-6q3 1 5 1-6-6-5-14z"/></svg></button>
      <button class="task" aria-label="CAM viewer"><svg width="34" height="34" viewBox="0 0 34 34"><ellipse cx="18" cy="20" rx="14" ry="10" fill="#198e8a"/><path fill="#5cc8b4" d="M6 18q12-12 24 0l-3 2q-9-8-18 0z"/><ellipse cx="19" cy="19" rx="7" ry="5" fill="#16797a" stroke="#bfd14a" stroke-width="2"/><circle cx="19" cy="17" r="3" fill="#efe37a"/><circle cx="19" cy="17" r="1" fill="#176"/><path fill="#36b48d" d="M1 8q6-7 11-1l3 2z"/><path stroke="#ddd" stroke-width="2" d="M2 14l5 9"/></svg></button>
      <button class="task current" aria-label="Exceed X"><svg width="34" height="34" viewBox="0 0 34 34"><path fill="#80128a" stroke="#fff" d="M2 4h7l23 27h-8z"/><path stroke="#fff" stroke-width="4" d="M31 4L4 30"/><path stroke="#32103a" stroke-width="2" d="M31 4L4 30"/></svg></button>
      <div class="tray">
        <svg width="18" height="18" viewBox="0 0 18 18"><path fill="#c9ccd0" d="M1 7h15v8H1z"/><path stroke="#555" stroke-dasharray="1 1" d="M3 9.500h11M3 11.500h11"/><path stroke="#555" d="M5 13.500h7"/><path fill="none" stroke="#ccc" d="M4 5q2-4 5-2t5-2"/></svg>
        <svg width="18" height="18" viewBox="0 0 18 18"><circle cx="9" cy="9" r="7" fill="#1929b8" stroke="#cfd6f2"/><text x="6" y="13" class="q">?</text></svg>
        <svg width="18" height="22" viewBox="0 0 18 22"><path fill="none" stroke="#fff" d="M8.500 2.500h6v4h-6zM6.500 5.500h5v4h-5z"/><path fill="#fff" d="M7 15h6l-3 3z"/></svg>
        <svg width="18" height="18" viewBox="0 0 18 18"><path fill="#fff" d="M5 12h8l-4-4z"/></svg>
        <svg width="20" height="18" viewBox="0 0 20 18"><path fill="#fff" d="M2 2h1v14H2zM4 3q3-1 5 1 3 1 5 0v6q-3 2-6 0H4z"/><circle cx="13" cy="12" r="5" fill="#d9281c"/><path stroke="#fff" stroke-width="2" d="M11 10l4 4M15 10l-4 4"/></svg>
        <svg width="20" height="18" viewBox="0 0 20 18"><path fill="#fff" d="M1 7h3l4-4v12l-4-4H1z"/><path fill="none" stroke="#ddd" d="M10 7q2 2 0 4M12 5q3 4 0 8M14 3q4 6 0 12"/></svg>
        <svg width="20" height="18" viewBox="0 0 20 18"><path fill="none" stroke="#fff" stroke-width="1.500" d="M7 5h10v8H7zM9 15h7M3 3v4h3M4 7v8h4"/><path stroke="#fff" d="M2.500 2v3M5.500 2v3"/></svg>
        <time class="clock">19:14<br>2023/2/24</time>
        <button class="desktop" aria-label="Show desktop"></button>
      </div>
    </footer>
  </body>
</html>
```
FILE: styles.css
```css
* { box-sizing: border-box; }
body { margin: 0; height: 100vh; display: flex; flex-direction: column; overflow: hidden; background: #000; color: #000; font-family: "Liberation Mono", "Courier New", monospace; font-size: 15px; }
button, input, select { font: inherit; color: inherit; margin: 0; padding: 0; border: 0; border-radius: 0; background: none; }
svg { display: block; flex: none; }
.defs { position: absolute; }

/* svg line helpers */
.l1 { fill: none; stroke: #000; stroke-width: 1px; }
.l2 { fill: none; stroke: #000; stroke-width: 2px; }
.t7 { font: bold 7px "Liberation Sans", sans-serif; }
.t8 { font: bold 8px "Liberation Sans", sans-serif; }
.t14 { font: bold 15px "Liberation Sans", sans-serif; }
.t18 { font: bold 18px "Liberation Sans", sans-serif; }

/* title bar */
.titlebar { position: relative; display: flex; align-items: center; height: 22px; flex: none; background: linear-gradient(90deg, #0a3a76, #123f7c 30%, #0b3166 60%, #123c78 80%, #0a2f64); border-bottom: 1px solid #a9bdd0; font: 13px "Noto Sans", sans-serif; overflow: hidden; }
.glass { position: absolute; left: 0; top: 0; }
.blurred { filter: blur(3px); }
.app-icon { width: 16px; height: 16px; }
.titlebar .app-icon { position: relative; }
.caption { position: relative; padding: 0 14px 0 4px; line-height: 20px; background: linear-gradient(90deg, #8b9fbb00, #8b9fbb 12px, #7d93b4 94%, #7d93b400); white-space: nowrap; }
.window-buttons { position: relative; display: flex; align-self: flex-start; margin-left: auto; margin-right: 2px; border: 1px solid #6d8db5; border-top: 0; border-radius: 0 0 5px 5px; }
.window-buttons button { width: 28px; height: 17px; display: grid; place-items: center; border-right: 1px solid #6d8db5; }
.window-buttons .wide { width: 47px; border-right: 0; }

/* menu and brand */
.top { display: flex; height: 56px; flex: none; background: #9adbda; }
.menubar { flex: 1; display: flex; align-items: center; gap: 18px; margin-right: 1px; padding: 0 14px 0 13px; border: 2px solid; border-color: #d4f5f4 #558788 #558788 #d4f5f4; outline: 1px solid #558788; outline-offset: -1px; border-bottom-width: 3px; box-shadow: inset -1px -1px 0 #d4f5f4; font: bold 14px "Liberation Serif", serif; }
.menubar a { color: #000; text-decoration: none; }
.menubar u { text-underline-offset: 3px; }
.help { margin-left: auto; }
.brand { display: flex; width: 413px; border: 2px solid; border-color: #558788 #d4f5f4 #d4f5f4 #558788; padding-left: 4px; }
.logo { margin: 9px 0 0; }
.wordmark { font: italic bold 32px "Liberation Sans", sans-serif; fill: #00008b; }
.product { width: 136px; text-align: center; font-family: "Liberation Serif", serif; font-weight: bold; white-space: nowrap; }
.name { font-size: 24px; line-height: 30px; }
.module { font-size: 14px; line-height: 20px; font-style: italic; padding-right: 24px; text-align: right; }
.date { flex: 1; padding-top: 3px; padding-left: 1px; font-style: italic; line-height: 15px; text-align: center; font-weight: bold; white-space: nowrap; }

.main { flex: 1; display: flex; min-height: 0; }

/* left column */
.sidebar { width: 155px; display: flex; flex-direction: column; background: #5ec4a9; border-right: 1px solid #7cdcc4; padding: 3px 2px 0 3px; margin-bottom: 2px; flex: none; }
.job div { height: 19px; border: 1px solid #000; background: #9adbda; line-height: 19px; padding-left: 2px; white-space: nowrap; }
.job div + div { border-top: 0; }
.matrix { margin-top: 2px; border: 1px solid #000; padding: 2px; }
.matrix button { display: block; width: 100%; height: 22px; border: 2px solid; border-color: #d4f5f4 #558788 #558788 #d4f5f4; background: #9adbda; text-align: left; padding-left: 1px; }
.layers-area { flex: 1; margin: 2px 0 0 -3px; border: 2px solid; border-color: #33705f #b5ecdc #b5ecdc #33705f; background: #50ceb0; padding: 0 0 0 3px; min-height: 0; }
.layers { width: 122px; border: 1px solid #000; outline: 1px solid #9fe5d3; padding: 2px 2px 10px 1px; background: #50ceb0; }
.group { list-style: none; margin: 0 0 3px; padding: 2px 1px 0 2px; background: #000; width: 117px; }
.group:last-child { margin-bottom: 0; }
.group li { display: flex; height: 16px; gap: 2px; justify-content: space-between; }
.group input { appearance: none; width: 14px; height: 14px; border: 2px solid #fff; background: #fff; box-shadow: inset 0 0 0 2px #000; flex: none; }
.group .active { border-color: #0000b0; box-shadow: inset 0 0 0 2px #000060; }
.mark { width: 14px; height: 14px; background: #f00; display: grid; place-items: center; }
.group button { display: flex; align-items: center; justify-content: space-between; width: 82px; height: 14px; padding: 0 2px; background: #9adbda; font-size: 12px; font-weight: bold; line-height: 14px; white-space: nowrap; }
.group button svg { width: 8px; height: 8px; }
.group .grid { width: 5px; height: 5px; }
.group .work { background: #fff; }
.group .mask { background: #00a57b; color: #063024; }
.group .signal { background: #ffc84f; }
.group .drill { background: #9ab2ba; }
.group .rout { background: #dadada; }
.selected { height: 20px; margin: 2px 0; border: 1px solid #000; background: #ffc84f; font-size: 12px; font-weight: bold; line-height: 20px; padding-left: 2px; }

/* drawing area */
.canvas { flex: 1; position: relative; min-width: 0; overflow: hidden; background: #000; }
.board { position: absolute; left: 0; top: 0; }
.silk { font: 17px "Liberation Sans", sans-serif; fill: #e01010; }
.ref { font: 19px "Liberation Mono", monospace; fill: #e01010; }
.pins { font: bold 5px "Liberation Mono", monospace; fill: #f00; }
.big { font: bold 55px "Liberation Sans", sans-serif; fill: #f00; stroke: #f00; stroke-width: 1px; stroke-linejoin: round; }
.mid { font: bold 35px "Liberation Mono", monospace; fill: #f00; stroke: #f00; stroke-width: 1px; stroke-linejoin: round; }

.popview { position: absolute; border: 1px solid #a5a5a5; border-radius: 6px; padding: 0 4px 5px; background: linear-gradient(#3a3a3c, #2c2c2e 30%, #111 31%, #080808); font-family: "Liberation Mono", monospace; }
.first { left: 992px; top: 108px; width: 569px; background: linear-gradient(90deg, #3a3a3c, #111 25%, #000 50%, #161618 70%, #303032); }
.second { left: 339px; top: 314px; width: 283px; background: linear-gradient(#777, #77777c 18%, #ddd 30%, #222 31%, #050505); }
.pop-title { display: flex; align-items: center; height: 26px; font: 12px "Noto Sans", sans-serif; }
.pop-title .app-icon { margin: 0 4px 0 2px; }
.pop-title span { padding: 0 6px 0 2px; background: #707070; border-radius: 6px; box-shadow: 0 0 6px #707070; line-height: 16px; }
.second .pop-title span { background: #969696; box-shadow: 0 0 6px #969696; }
.pop-x { align-self: flex-start; margin-left: auto; width: 48px; height: 19px; display: grid; place-items: center; border: 1px solid #8a8a8a; border-top: 0; border-radius: 0 0 5px 5px; }
.second .pop-x { background: linear-gradient(#d2897c, #c0422c 50%, #b02812 51%, #c8523a); border-color: #eee; }
.pop-body { border: 1px solid #999; background: #000; padding: 1px; }
.pop-row { display: flex; gap: 2px; padding-right: 3px; }
.view { flex: 1; width: 0; overflow: hidden; border: 3px solid; border-color: #33705f #9fe5d3 #9fe5d3 #33705f; background: #000; }
.pop-tools { display: flex; flex-direction: column; gap: 2px; padding: 2px 0; }
.pop-tools button { width: 33px; height: 33px; border: 2px solid #5ec4a9; background: #9adbda; display: grid; place-items: center; box-shadow: inset 2px 2px 0 #c9fbf7, inset -2px -2px 0 #4f8e90; }
.pop-tools svg { width: 22px; height: 22px; border: 1px solid #000; }
.filler { flex: 1; background: #50ceb0; }
.pop-close { display: block; width: 100%; height: 27px; margin-top: 1px; padding-top: 2px; border: 2px solid #5ec4a9; background: #9adbda; box-shadow: inset 2px 2px 0 #c9fbf7, inset -2px -2px 0 #4f8e90; }

/* right column */
.right { width: 163px; flex: none; display: flex; flex-direction: column; border-left: 1px solid #33705f; margin-bottom: 2px; }
.tools { display: grid; grid-template-columns: repeat(4, 38px); gap: 2px; padding: 2px 1px 1px; border-bottom: 2px solid #9fe5d3; border-right: 2px solid #9fe5d3; background: #000; }
.view-tools { border-top: 1px solid #33705f; }
.edit-tools { padding-top: 3px; border-color: #777; }
.tools button { width: 38px; height: 38px; border: 3px solid; border-color: #c9f5f4 #558788 #558788 #c9f5f4; background: #9adbda; display: grid; place-items: center; }
.tools svg { width: 30px; height: 30px; border: 1px solid #000; }
.tools .red { border-color: #d05050 #a01818 #a01818 #d05050; box-shadow: inset 0 0 0 1px #b22222; }
.edit-tools button { border-color: #eee #888 #888 #eee; background: #cfcfcf; }
.edit-tools .white { background: #fff; border-color: #fff #999 #999 #fff; }
.edit-tools .pick { background: #ffc84f; border-color: #ffe6a8 #a37c28 #a37c28 #ffe6a8; }
.overview { flex: 1; display: flex; align-items: center; background: #000; border: 2px solid; border-color: #33705f #9fe5d3 #9fe5d3 #33705f; border-left-width: 1px; min-height: 0; }
.extent { width: 100%; aspect-ratio: 159 / 164; background: #f00; border: 2px solid #f00; outline: 1px solid #a00; outline-offset: -3px; padding: 3px 4px 8px 3px; }
.frame { height: 100%; border: 2px solid #9adbda; }
.coords { height: 43px; background: #50ceb0; border: 2px solid; border-color: #33705f #9fe5d3 #9fe5d3 #33705f; padding: 6px 0 0 1px; line-height: 15px; }

/* command line */
.command { display: flex; height: 34px; flex: none; background: #ffffce; border-bottom: 2px solid #000; font-size: 12px; font-weight: bold; }
.snap { width: 33px; display: grid; place-items: center; border-right: 1px solid #000; }
.snap.on { background: #5ec4a9; width: 30px; }
.snap button { width: 26px; height: 26px; display: grid; place-items: center; border: 2px solid; border-color: #fffff0 #b5b590 #b5b590 #fffff0; background: #ffffce; }
.snap svg { width: 20px; height: 20px; }
.command label { width: 47px; line-height: 34px; padding-left: 2px; white-space: nowrap; }
.command input { width: 171px; border: 3px solid; border-color: #8c8c70 #c9c9a4 #c9c9a4 #8c8c70; outline: 1px solid #000; margin: 2px 2px 2px 1px; padding-left: 4px; }
.message { flex: 1; line-height: 34px; padding-left: 4px; white-space: nowrap; }
.units { width: 81px; background: #5ec4a9; border-left: 2px solid #000; padding: 2px 3px 2px 6px; }
.units select { appearance: none; width: 100%; height: 28px; border: 2px solid; border-color: #b5ecdc #33705f #33705f #b5ecdc; padding-left: 4px; font-size: 15px; font-weight: bold; background: linear-gradient(#b5ecdc 2px, #50ceb0 2px, #50ceb0 5px, #33705f 5px) no-repeat right 6px center / 12px 7px, #50ceb0; }

/* status */
.status { height: 31px; flex: none; background: #d8fffd; padding: 2px; border-top: 2px solid #7d9c9c; }
.status div { height: 26px; border: 1px solid #000; background: #b0fffd; box-shadow: inset 2px 2px 0 #dcfffe, inset -3px -3px 0 #6b9f9e; text-align: center; font-size: 12px; font-weight: bold; line-height: 22px; }

/* taskbar */
.taskbar { display: flex; height: 40px; flex: none; background: linear-gradient(90deg, #0a2344, #10305c 30%, #0d2c58 60%, #0c2d5a 80%, #051c3c); border-top: 1px solid #6b7f95; }
.start { width: 60px; display: flex; padding-left: 8px; }
.task { width: 58px; height: 38px; margin-right: 4px; display: grid; place-items: center; border: 1px solid #7d94b0; border-radius: 3px; background: linear-gradient(135deg, #7d93ac, #3d5c82 45%, #1e4070 46%, #2d5080); }
.current { width: 52px; background: linear-gradient(135deg, #c2cedb, #8496b0 50%, #6f86a5); box-shadow: 4px 0 0 -1px #33557f, 5px 0 0 -1px #8fa3bb; }
.tray { margin-left: auto; display: flex; align-items: center; gap: 4px; color: #fff; }
.q { font: bold 11px "Liberation Sans", sans-serif; fill: #fff; }
.clock { font: 12px "Noto Sans", sans-serif; line-height: 18px; text-align: center; width: 72px; }
.desktop { width: 14px; height: 39px; border: 1px solid #8294aa; background: linear-gradient(135deg, #6f8298, #15305a 60%); }
```
